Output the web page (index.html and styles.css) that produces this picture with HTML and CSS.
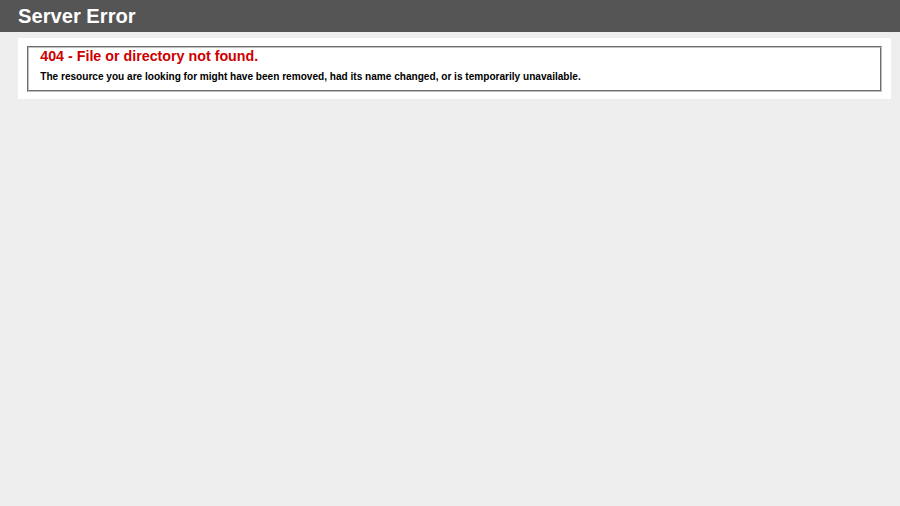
FILE: index.html
```
<!DOCTYPE html>
<html lang="en">
<head>
    <meta charset="UTF-8">
    <title>404 - File or directory not found.</title>
    <link rel="stylesheet" href="styles.css">
</head>
<body>
    <div id="header"><h1>Server Error</h1></div>
    <div id="content">
        <div class="content-container">
            <fieldset>
                <h2>404 - File or directory not found.</h2>
                <h3>The resource you are looking for might have been removed, had its name changed, or is temporarily unavailable.</h3>
            </fieldset>
        </div>
    </div>
</body>
</html>
```

FILE: styles.css
```
body{
    margin: 0;
    font-size: 8.4px;
    font-family: Verdana, "Liberation Sans", Arial, Helvetica, sans-serif;
    background: #EEEEEE;
}
fieldset{
    padding: 0 11.25px 7.5px 11.25px;
    margin: 0 1.5px;
    border: 2px groove #c0c0c0;
}
h1{
    font-size: 2.4em;
    margin: 0;
    color: #FFF;
}
h2{
    font-size: 1.7em;
    margin: 0;
    color: #CC0000;
}
h3{
    font-size: 1.2em;
    margin: 7.5px 0 0 0;
    color: #000000;
}
#header{
    margin: 0;
    padding: 4.5px 2%;
    font-family: "trebuchet MS", Verdana, "Liberation Sans", sans-serif;
    color: #FFF;
    background-color: #555555;
}
#content{
    margin: 0 9px 0 18px;
    position: relative;
}
.content-container{
    background: #FFF;
    margin-top: 6px;
    padding: 7.5px;
    position: relative;
}
```
